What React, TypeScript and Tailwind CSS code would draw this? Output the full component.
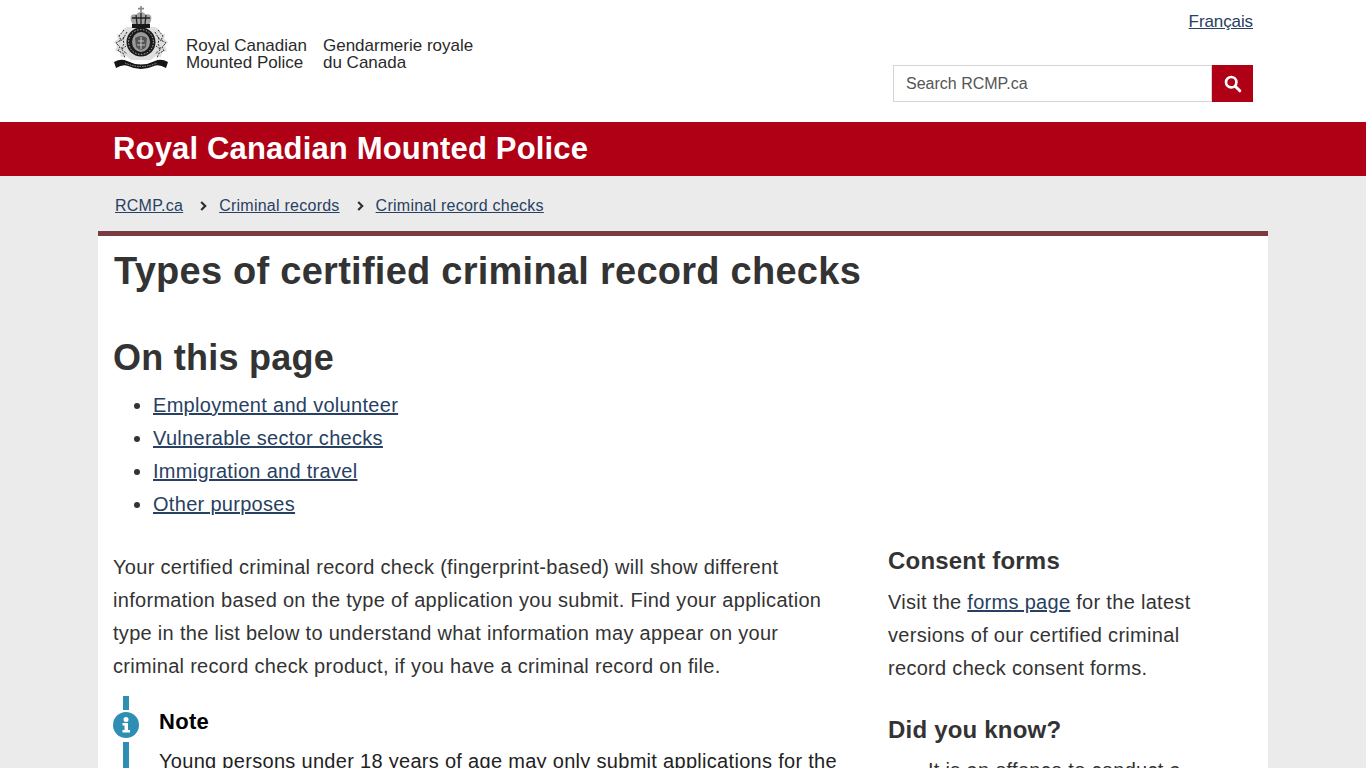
import React from "react";

const F = { fontFamily: '"Liberation Sans", Arial, sans-serif' };
const link = "text-[#284162] underline";

function Crest() {
  return (
    <svg width="56" height="64" viewBox="0 0 56 64" className="shrink-0">
      <path d="M14 21 L9 24 L9 28 L4 28 L5 33 L1 36 L4 40 L2 45 L7 46 L8 51 L13 50 L18 54 L38 54 L43 50 L48 51 L49 46 L54 45 L52 40 L55 36 L51 33 L52 28 L47 28 L47 24 L42 21 Z" fill="#dedede" />
      <g fill="none" stroke="#2a2a2a" strokeWidth="1" strokeDasharray="2 1.3">
        <path d="M11 24 L6 30 L8 34 L3 37 L7 41 L5 45 L10 47 L12 52" />
        <path d="M45 24 L50 30 L48 34 L53 37 L49 41 L51 45 L46 47 L44 52" />
        <path d="M14 26 L10 33 L11 38 L8 43 L14 48" />
        <path d="M42 26 L46 33 L45 38 L48 43 L42 48" />
        <path d="M11 31 L7 36 M45 31 L49 36 M9 43 L13 40 M47 43 L43 40" />
      </g>
      <path d="M28 0 L28 6 M25 2.6 L31 2.6" stroke="#888" strokeWidth="1.6" />
      <path d="M18 15 Q16 7 23 8.5 Q28 3 33 8.5 Q40 7 38 15 L36 19 L20 19 Z" fill="#a6a6a6" />
      <path d="M19 12 L37 12 M23 9 L24 18 M28 7 L28 18 M33 9 L32 18" stroke="#222" strokeWidth="1.3" />
      <rect x="19" y="18" width="18" height="4" fill="#1a1a1a" />
      <circle cx="28" cy="36" r="14.5" fill="#1a1a1a" />
      <circle cx="28" cy="36" r="12.4" fill="none" stroke="#bbb" strokeWidth="1" strokeDasharray="1.5 1.5" />
      <ellipse cx="28" cy="36" rx="9" ry="10" fill="#9a9a9a" />
      <path d="M22 32 Q28 28 34 32 L33 41 Q28 47 23 41 Z" fill="#555" />
      <path d="M25 35 L31 35 M28 31 L28 43 M24 39 L32 39" stroke="#c4c4c4" strokeWidth="1.1" />
      <path d="M1 56 Q8 52 14 55 Q28 62 42 55 Q48 52 55 56 L53 62 Q46 58 41 60 Q28 66 15 60 Q10 58 3 62 Z" fill="#161616" />
      <path d="M12 57 Q28 64 44 57" fill="none" stroke="#bbb" strokeWidth="0.8" strokeDasharray="1.5 1" />
    </svg>
  );
}

function Chevron() {
  return (
    <svg width="7" height="10" viewBox="0 0 7 10" className="mr-[12px] ml-[17px]">
      <path d="M1.2 1 L5.2 5 L1.2 9" fill="none" stroke="#2e2e2e" strokeWidth="2.2" />
    </svg>
  );
}

export default function App() {
  return (
    <div style={F} className="h-[768px] overflow-hidden bg-[#ebebeb] text-[#333]">
      <header className="h-[122px] bg-white">
        <div className="mx-auto flex h-full w-[1140px] justify-between">
          <div className="flex items-start pt-[6px]">
            <Crest />
            <div className="mt-[31px] ml-[17px] flex gap-[16px] text-[17px] leading-[17px] text-[#2a2a2a]">
              <div>Royal Canadian<br />Mounted Police</div>
              <div>Gendarmerie royale<br />du Canada</div>
            </div>
          </div>
          <div className="flex flex-col items-end">
            <a className={`${link} mt-[12px] text-[17px] leading-[19px] tracking-[-0.1px]`}>Français</a>
            <div className="mt-[34px] flex h-[37px] w-[360px]">
              <div className="flex flex-1 items-center border border-[#d5d5d5] pl-[12px] text-[16px] text-[#555]">Search RCMP.ca</div>
              <div className="flex w-[41px] items-center justify-center bg-[#af0015]">
                <svg width="18" height="18" viewBox="0 0 18 18">
                  <circle cx="7.2" cy="7.2" r="5.2" fill="none" stroke="#fff" strokeWidth="2.6" />
                  <path d="M11.2 11.2 L15.8 15.8" stroke="#fff" strokeWidth="3" strokeLinecap="round" />
                </svg>
              </div>
            </div>
          </div>
        </div>
      </header>

      <div className="h-[54px] bg-[#af0015]">
        <div className="mx-auto w-[1140px] text-[31px] leading-[53px] font-bold tracking-[0.17px] text-white">Royal Canadian Mounted Police</div>
      </div>

      <nav className="mx-auto flex h-[55px] w-[1136px] items-center pt-[4px] text-[16px] tracking-[0.25px]">
        <a className={link}>RCMP.ca</a>
        <Chevron />
        <a className={link}>Criminal records</a>
        <Chevron />
        <a className={link}>Criminal record checks</a>
      </nav>

      <main className="mx-auto h-[600px] w-[1170px] border-t-[5px] border-[#7a3b42] bg-white px-[15px] text-[20px] tracking-[0.3px]">
        <h1 className="pt-[13px] pl-[1px] text-[38px] leading-[44px] font-bold tracking-[0.26px]">Types of certified criminal record checks</h1>
        <h2 className="mt-[43px] text-[36px] leading-[44px] font-bold tracking-[0.25px]">On this page</h2>
        <ul className="mt-[9px] list-disc pl-[40px] leading-[33px]">
          <li><a className={link}>Employment and volunteer</a></li>
          <li><a className={link}>Vulnerable sector checks</a></li>
          <li><a className={link}>Immigration and travel</a></li>
          <li><a className={link}>Other purposes</a></li>
        </ul>

        <div className="flex">
          <div className="mt-[30px] w-[775px] shrink-0 pr-[38px]">
            <p className="leading-[33px]">Your certified criminal record check (fingerprint-based) will show different information based on the type of application you submit. Find your application type in the list below to understand what information may appear on your criminal record check product, if you have a criminal record on file.</p>
            <div className="mt-[13px] flex">
              <div className="flex w-[26px] shrink-0 flex-col items-center">
                <div className="h-[14px] w-[6px] bg-[#2f8fb3]" />
                <svg width="26" height="26" viewBox="0 0 26 26" className="mt-[2px] mb-[4px]">
                  <circle cx="13" cy="13" r="13" fill="#2f8fb3" />
                  <circle cx="13" cy="7.4" r="2.5" fill="#fff" />
                  <path d="M9.5 11 H15 V18 H17 V20.5 H9.5 V18 H11.5 V13.4 H9.5 Z" fill="#fff" />
                </svg>
                <div className="h-[60px] w-[6px] bg-[#2f8fb3]" />
              </div>
              <div className="ml-[20px]">
                <div className="mt-[13px] text-[22px] leading-[26px] font-bold text-black">Note</div>
                <p className="mt-[10px] w-[700px] leading-[33px] text-[#222]">Young persons under 18 years of age may only submit applications for the</p>
              </div>
            </div>
          </div>
          <aside className="flex-1 pt-[24px]">
            <h3 className="text-[24px] leading-[32px] font-bold tracking-[0.2px]">Consent forms</h3>
            <p className="mt-[9px] w-[330px] leading-[33px]">Visit the <a className={link}>forms page</a> for the latest versions of our certified criminal record check consent forms.</p>
            <h3 className="mt-[29px] text-[24px] leading-[32px] font-bold tracking-[0.2px]">Did you know?</h3>
            <ul className="mt-[8px] list-disc pl-[40px] leading-[33px]">
              <li>It is an offence to conduct a</li>
            </ul>
          </aside>
        </div>
      </main>
    </div>
  );
}
